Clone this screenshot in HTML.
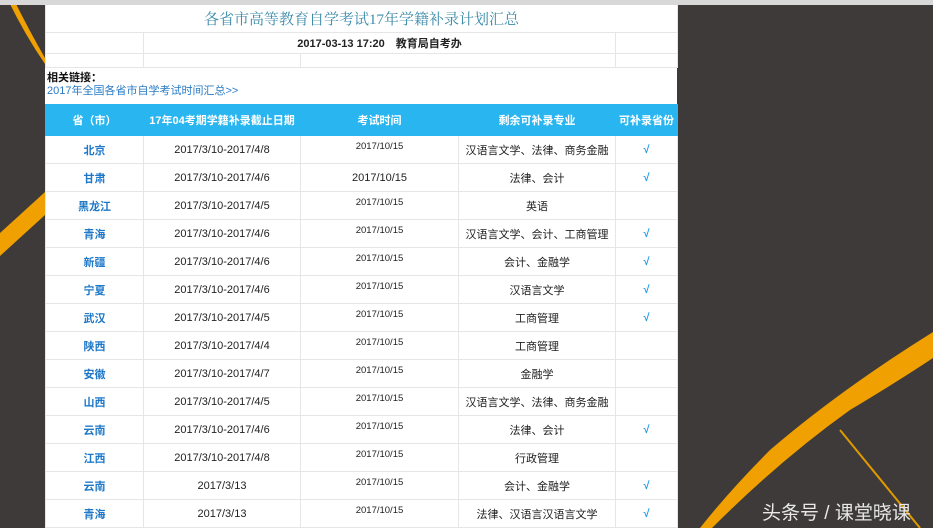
<!DOCTYPE html>
<html><head><meta charset="utf-8"><style>
body{margin:0;width:933px;height:528px;overflow:hidden;background:#3d3a39;position:relative;font-family:"Liberation Sans","Noto Sans CJK SC",sans-serif}
#top{position:absolute;left:0;top:0;width:933px;height:5px;background:#d8d8d8}
#page{position:absolute;left:45px;top:5px;width:632px;height:523px;background:#fff}
table{border-collapse:collapse;position:absolute;left:0;width:632px;table-layout:fixed}
td{border:1px solid #e6e6e6;text-align:center;font-size:11px;color:#222;padding:0}
.h td{background:#29b6f0;color:#fff;font-weight:bold;border-color:#29b6f0;height:30px;font-size:11px}
.r td{height:27px}
.p{color:#1e78c8;font-weight:bold}
.c{color:#1e9be0;font-weight:bold}
.t{font-size:9.5px;position:relative;top:-4px}
svg{position:absolute;left:0;top:0}
</style></head><body>
<svg width="933" height="528"><path d="M8 0 Q25 35 45 64 L45 58 Q30 32 14 0Z" fill="#f0a000"/>
<path d="M45 192 L0 233 L0 256 L45 215Z" fill="#f0a000"/>
<path d="M933 332 Q840 390 770 450 Q730 490 700 528 L712 528 Q780 460 850 410 Q900 380 933 358Z" fill="#f0a000"/>
<path d="M840 430 L920 528" stroke="#e09a00" stroke-width="2"/></svg>
<div id="top"></div>
<div id="page">
<table style="top:0">
<colgroup><col width="98"><col width="157"><col width="158"><col width="157"><col width="62"></colgroup>
<tr><td colspan="5" style="height:27px;font-size:15px;color:#3a8aa8;border-top:none;font-family:'Liberation Serif','Noto Serif CJK SC',serif">各省市高等教育自学考试17年学籍补录计划汇总</td></tr>
<tr><td style="height:20px"></td><td colspan="3" style="font-weight:bold;font-size:11px">2017-03-13 17:20　教育局自考办</td><td></td></tr>
<tr><td style="height:13px"></td><td></td><td colspan="2"></td><td></td></tr>
</table>
<div style="position:absolute;left:2px;top:64px;font-size:11px;font-weight:bold;color:#111">相关链接：</div>
<div style="position:absolute;left:2px;top:77px;font-size:11px;color:#2a7bc6">2017年全国各省市自学考试时间汇总&gt;&gt;</div>
<table style="top:99px">
<colgroup><col width="98"><col width="157"><col width="158"><col width="157"><col width="62"></colgroup>
<tr class="h"><td>省（市）</td><td>17年04考期学籍补录截止日期</td><td>考试时间</td><td>剩余可补录专业</td><td>可补录省份</td></tr>
<tr class="r"><td class="p">北京</td><td>2017/3/10-2017/4/8</td><td><span class="t">2017/10/15</span></td><td>汉语言文学、法律、商务金融</td><td class="c">√</td></tr>
<tr class="r"><td class="p">甘肃</td><td>2017/3/10-2017/4/6</td><td>2017/10/15</td><td>法律、会计</td><td class="c">√</td></tr>
<tr class="r"><td class="p">黑龙江</td><td>2017/3/10-2017/4/5</td><td><span class="t">2017/10/15</span></td><td>英语</td><td></td></tr>
<tr class="r"><td class="p">青海</td><td>2017/3/10-2017/4/6</td><td><span class="t">2017/10/15</span></td><td>汉语言文学、会计、工商管理</td><td class="c">√</td></tr>
<tr class="r"><td class="p">新疆</td><td>2017/3/10-2017/4/6</td><td><span class="t">2017/10/15</span></td><td>会计、金融学</td><td class="c">√</td></tr>
<tr class="r"><td class="p">宁夏</td><td>2017/3/10-2017/4/6</td><td><span class="t">2017/10/15</span></td><td>汉语言文学</td><td class="c">√</td></tr>
<tr class="r"><td class="p">武汉</td><td>2017/3/10-2017/4/5</td><td><span class="t">2017/10/15</span></td><td>工商管理</td><td class="c">√</td></tr>
<tr class="r"><td class="p">陕西</td><td>2017/3/10-2017/4/4</td><td><span class="t">2017/10/15</span></td><td>工商管理</td><td></td></tr>
<tr class="r"><td class="p">安徽</td><td>2017/3/10-2017/4/7</td><td><span class="t">2017/10/15</span></td><td>金融学</td><td></td></tr>
<tr class="r"><td class="p">山西</td><td>2017/3/10-2017/4/5</td><td><span class="t">2017/10/15</span></td><td>汉语言文学、法律、商务金融</td><td></td></tr>
<tr class="r"><td class="p">云南</td><td>2017/3/10-2017/4/6</td><td><span class="t">2017/10/15</span></td><td>法律、会计</td><td class="c">√</td></tr>
<tr class="r"><td class="p">江西</td><td>2017/3/10-2017/4/8</td><td><span class="t">2017/10/15</span></td><td>行政管理</td><td></td></tr>
<tr class="r"><td class="p">云南</td><td>2017/3/13</td><td><span class="t">2017/10/15</span></td><td>会计、金融学</td><td class="c">√</td></tr>
<tr class="r"><td class="p">青海</td><td>2017/3/13</td><td><span class="t">2017/10/15</span></td><td>法律、汉语言汉语言文学</td><td class="c">√</td></tr>
</table>
</div>
<div style="position:absolute;left:762px;top:498px;font-size:19px;color:#e8e8e8">头条号 / 课堂晓课</div>
</body></html>
